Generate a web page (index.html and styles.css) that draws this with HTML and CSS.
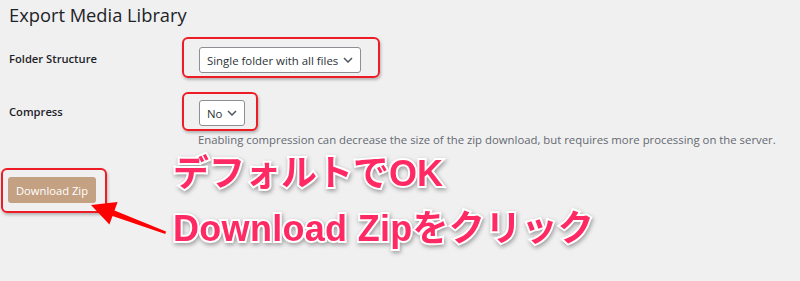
FILE: index.html
```html
<!DOCTYPE html>
<html lang="ja">
<head>
  <meta charset="UTF-8" />
  <meta name="viewport" content="width=device-width, initial-scale=1.0" />
  <title>Export Media Library</title>
  <link rel="stylesheet" href="styles.css">
</head>
<body>
  <h1 class="page-title">Export Media Library</h1>

  <div class="form-table">
    <div class="form-row row-folder">
      <div class="form-label">Folder Structure</div>
      <div class="form-field">
        <span class="mark mark-folder">
          <span class="select">Single folder with all files
            <svg class="chevron" viewBox="0 0 10 6" width="10" height="6"><path d="M1 1l4 4 4-4" fill="none" stroke="#50575e" stroke-width="1.5"/></svg>
          </span>
        </span>
      </div>
    </div>

    <div class="form-row row-compress">
      <div class="form-label">Compress</div>
      <div class="form-field">
        <span class="mark mark-compress">
          <span class="select">No
            <svg class="chevron" viewBox="0 0 10 6" width="10" height="6"><path d="M1 1l4 4 4-4" fill="none" stroke="#50575e" stroke-width="1.5"/></svg>
          </span>
        </span>
        <p class="description">Enabling compression can decrease the size of the zip download, but requires more processing on the server.</p>
      </div>
    </div>
  </div>

  <div class="submit-row">
    <span class="mark mark-button">
      <button class="button-primary" type="button">Download Zip</button>
    </span>
  </div>

  <!-- annotation layer -->
  <svg class="arrow" viewBox="0 0 800 281" width="800" height="281">
    <polygon fill="#f00" points="91,205 117.6,201.9 114.5,210.4 166,231.5 165.3,234 112.5,216 109.4,224.5"/>
  </svg>
  <div class="callout">
    <div>デフォルトでOK</div>
    <div class="callout-second">Download Zipをクリック</div>
  </div>
</body>
</html>
```

FILE: styles.css
```css
body {
  margin: 0;
  padding: 0 9px;
  background: #f0f0f1;
  color: #1d2327;
  font-family: "Open Sans", "Noto Sans", sans-serif;
  font-size: 12px;
  position: relative;
  height: 281px;
  overflow: hidden;
}

.page-title {
  margin: 0;
  padding-top: 2px;
  font-size: 18.3px;
  font-weight: 400;
  line-height: 26px;
  color: #1d2327;
}

.form-table {
  margin-top: 9px;
}

.form-row {
  display: flex;
  align-items: flex-start;
}

.form-label {
  width: 173px;
  flex: none;
  font-weight: 600;
  font-size: 11.2px;
  color: #1d2327;
}

.row-folder .form-label {
  padding-top: 14px;
}

.row-compress {
  margin-top: 14px;
}

.row-compress .form-label {
  padding-top: 12px;
}

.form-field {
  display: flex;
  flex-direction: column;
  align-items: flex-start;
}

.mark {
  display: inline-flex;
  border: 2px solid #ee1c25;
  border-radius: 6px;
  box-shadow: 1px 2px 3px rgba(0, 0, 0, 0.25);
}

.mark-folder {
  padding: 8px 17px 3px 15px;
}

.mark-compress {
  padding: 6px 11px 3px 15px;
}

.select {
  display: inline-flex;
  align-items: center;
  height: 24px;
  padding: 0 7px 0 7px;
  gap: 5px;
  background: #fff;
  border: 1px solid #8c8f94;
  border-radius: 3px;
  color: #2c3338;
  font-size: 11.4px;
  white-space: nowrap;
}

.chevron {
  display: block;
}

.description {
  margin: 1px 0 0 16px;
  color: #646970;
  font-size: 11.35px;
  line-height: 16px;
  white-space: nowrap;
}

.submit-row {
  margin: 20px 0 0 -8px;
}

.mark-button {
  padding: 7px 9px 8px 5px;
}

.button-primary {
  height: 26px;
  padding: 0 8px;
  border: 0;
  border-radius: 3px;
  background: #c4a183;
  color: #fff;
  font-family: "Open Sans", "Noto Sans", sans-serif;
  font-size: 11.2px;
}

.arrow {
  position: absolute;
  left: 0;
  top: 0;
  pointer-events: none;
}

.callout {
  position: absolute;
  left: 173px;
  top: 146px;
  font-family: "Liberation Sans", "Noto Sans CJK JP", sans-serif;
  font-weight: 700;
  font-size: 36px;
  line-height: 55px;
  color: #ff2a63;
  -webkit-text-stroke: 4px #fff;
  paint-order: stroke fill;
  filter: drop-shadow(1px 2px 2px rgba(0, 0, 0, 0.35));
  white-space: nowrap;
}

.callout-second {
  letter-spacing: 0.3px;
}
```
